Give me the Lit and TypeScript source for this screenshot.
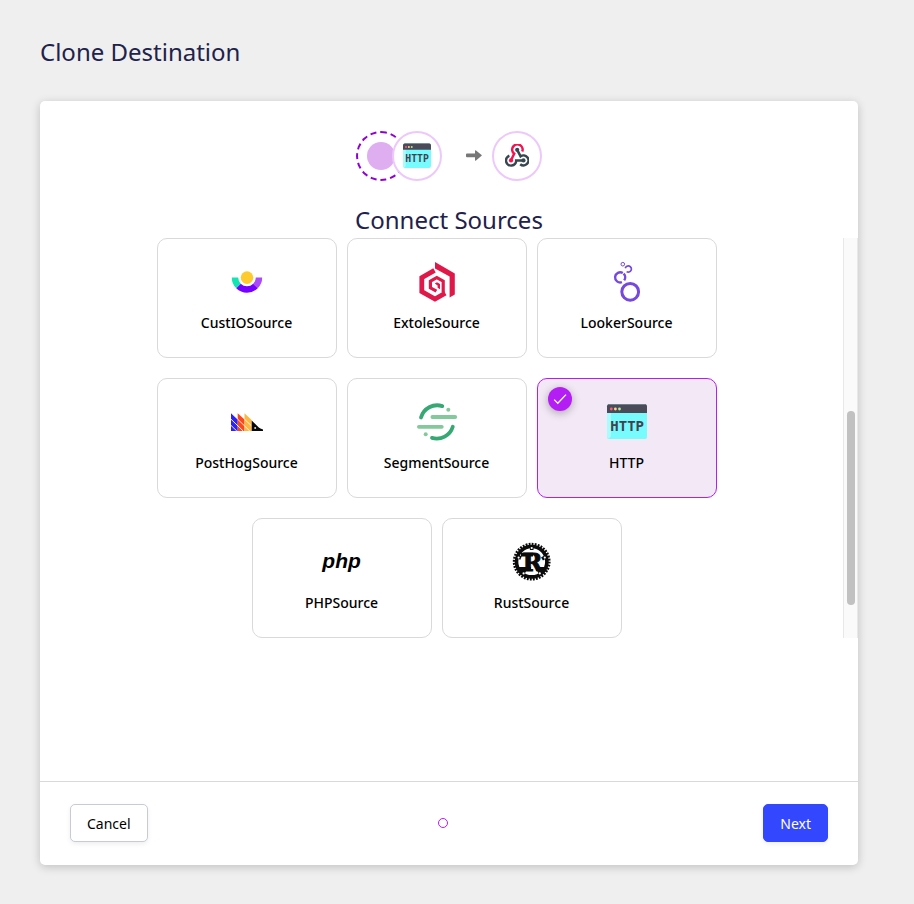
import { LitElement, html, css, svg, TemplateResult } from "lit";
import { customElement, property, state } from "lit/decorators.js";
import { classMap } from "lit/directives/class-map.js";

const icons: Record<string, TemplateResult> = {
  custio: svg`
    <g fill="none" stroke-width="6.4">
      <path d="M8 15.5A12 12 0 0 0 11.5 24" stroke="#12e5b2"/>
      <path d="M28.5 24A12 12 0 0 0 32 15.5" stroke="#a94bf8"/>
      <path d="M11.5 24A12 12 0 0 0 28.5 24" stroke="#7500ff"/>
    </g>
    <circle cx="20" cy="15.6" r="7.6" fill="#fff"/>
    <circle cx="20" cy="15.6" r="6.3" fill="#fdcb2e"/>`,
  extole: svg`
    <g fill="none" stroke="#e01849">
      <path d="M17.5 8.3L4.8 15.6V29.6L18 37L28.3 31.2" stroke-width="4.8"/>
      <path d="M19.4 29.2L13.4 25.8V19.2L19.8 15.6L26.2 19.2V30.2" stroke-width="3.2"/>
    </g>
    <path d="M18 0L37.8 11.4V32.6L32.6 35.6V14.6L18 6.4Z" fill="#e01849"/>
    <path d="M17.8 21.4L20 20.2L23 22V27.2L20.6 25.8V23.4Z" fill="#e01849"/>`,
  looker: svg`
    <g fill="none" stroke="#7549dc">
      <circle cx="23.2" cy="29.8" r="8.4" stroke-width="3"/>
      <path d="M15.8 11A5.1 5.1 0 1 0 14.9 20.2" stroke-width="2.4"/>
      <path d="M16.6 11.6A5.2 5.2 0 0 1 17.2 18.4" stroke-width="2.4"/>
      <path d="M18.3 6.2A3.1 3.1 0 1 1 19.6 9.6" stroke-width="1.7"/>
      <circle cx="15.8" cy="2.2" r="1.8" stroke-width="1"/>
    </g>`,
  posthog: svg`
    <path d="M4 11.2L10.7 17.6V29H4Z" fill="#2f22f5"/>
    <path d="M4.6 11.2L10.7 11.2V17.2Z" fill="#fff"/>
    <path d="M10.7 11.2L17.5 17.6V29H10.7Z" fill="#fb471c"/>
    <path d="M17.5 11.2L24.6 18V29H17.5Z" fill="#fdb640"/>
    <path d="M4 17.2L16.2 29M4 23.4L9.8 29M10.7 17.2L22.8 29M17.5 17.2L24.6 24" stroke="#fff" stroke-width=".9"/>
    <path d="M24.7 18.4L31.8 25.5Q33 26.8 36 27.4V29H24.7Z" fill="#080808"/>
    <circle cx="28.2" cy="26" r="1" fill="#ddd"/>`,
  segment: svg`
    <g fill="none" stroke-width="3.8" stroke-linecap="round">
      <path d="M4 15.5A16.8 16.8 0 0 1 25.3 4.1M35.8 24.7A16.8 16.8 0 0 1 15 35.9" stroke="#35a873"/>
      <path d="M15.4 15H38.2M1.9 24.8H24.8" stroke="#84c99b"/>
    </g>
    <circle cx="31.3" cy="7.7" r="2" fill="#84c99b"/>
    <circle cx="8.7" cy="32.3" r="2" fill="#84c99b"/>`,
  http: svg`
    <rect x="0" y="2" width="40" height="35" rx="2.6" fill="#78fbfd"/>
    <path d="M0 10H4V33Q4 36 1.5 36.6Q0 36 0 34Z" fill="#a8fcfd"/>
    <path d="M0 11V4.6Q0 2 2.6 2H37.4Q40 2 40 4.6V11Z" fill="#4a4a59"/>
    <path d="M1 3Q1.6 2 2.6 2H37.4Q38.4 2 39 3Z" fill="#6a7f8c"/>
    <circle cx="4.3" cy="7" r="1.4" fill="#ff5b6a"/>
    <circle cx="8.4" cy="7" r="1.4" fill="#ffd782"/>
    <circle cx="12.5" cy="7" r="1.4" fill="#b4e69a"/>
    <text x="20.2" y="28.6" class="http-text">HTTP</text>`,
  php: svg`<text x="19.6" y="26" class="php-text">php</text>`,
  rust: svg`
    <g fill="none" stroke="#0b0b0b">
      <circle cx="19.7" cy="19.7" r="17.4" stroke-width="3" pathLength="72" stroke-dasharray="1.2 0.8"/>
      <circle cx="19.7" cy="19.7" r="15.2" stroke-width="3.6"/>
      <path d="M5.5 14.5L9 16M34 14.5L30 17M11 31.5L12.5 28M28.5 31.5L27 28M19.7 5V8" stroke-width="3.6"/>
      <path d="M9 12.6H21M7 27H19M24 27H33" stroke-width="3.8"/>
    </g>
    <g fill="#fff">
      <circle cx="19.7" cy="6" r="1.1"/><circle cx="6.6" cy="15.6" r="1.1"/>
      <circle cx="32.8" cy="15.6" r="1.1"/><circle cx="11.6" cy="31.4" r="1.1"/>
      <circle cx="27.8" cy="31.4" r="1.1"/>
    </g>
    <text x="20.6" y="28.6" class="rust-text">R</text>`,
};

interface Source {
  id: string;
  label: string;
}

const sources: Source[] = [
  { id: "custio", label: "CustIOSource" },
  { id: "extole", label: "ExtoleSource" },
  { id: "looker", label: "LookerSource" },
  { id: "posthog", label: "PostHogSource" },
  { id: "segment", label: "SegmentSource" },
  { id: "http", label: "HTTP" },
  { id: "php", label: "PHPSource" },
  { id: "rust", label: "RustSource" },
];

@customElement("source-icon")
export class SourceIcon extends LitElement {
  @property() name = "";

  static styles = css`
    :host { display: block; width: 40px; height: 40px; }
    .icon { display: block; width: 100%; height: 100%; overflow: visible; }
    .http-text { font: 700 14px "DejaVu Sans Mono", monospace; fill: #42424f; text-anchor: middle; }
    .php-text { font: italic 700 21px "Liberation Sans", sans-serif; fill: #000; text-anchor: middle; }
    .rust-text { font: 700 24px "DejaVu Serif", serif; fill: #0b0b0b; stroke: #0b0b0b; stroke-width: 1px; text-anchor: middle; }
  `;

  render() {
    return html`<svg class="icon" viewBox="0 0 40 40" aria-hidden="true">${icons[this.name]}</svg>`;
  }
}

@customElement("source-card")
export class SourceCard extends LitElement {
  @property() name = "";
  @property() label = "";
  @property({ type: Boolean }) selected = false;

  static styles = css`
    :host { display: block; width: 180px; height: 120px; }
    .card {
      position: relative;
      box-sizing: border-box;
      width: 100%;
      height: 100%;
      padding: 0;
      display: flex;
      flex-direction: column;
      align-items: center;
      justify-content: center;
      gap: 10px;
      border: 1px solid #d9d9d9;
      border-radius: 10px;
      background: #fff;
      color: #000;
      font: 500 14px/22px "Noto Sans", sans-serif;
      cursor: pointer;
    }
    .selected { background: #f3e8f6; border-color: #b41ef5; }
    .check {
      position: absolute;
      top: 8px;
      left: 10px;
      width: 24px;
      height: 24px;
      border-radius: 50%;
      background: #b41ef5;
      box-shadow: 0 2px 8px rgba(0, 0, 0, 0.3);
    }
    .mark { display: block; fill: none; stroke: #fff; stroke-width: 1.3; }
  `;

  render() {
    return html`
      <button class=${classMap({ card: true, selected: this.selected })} type="button" aria-pressed=${this.selected}>
        ${this.selected
          ? html`<span class="check"><svg class="mark" width="24" height="24" viewBox="0 0 24 24"><path d="M6.2 12.6L9.8 16.2L18 7.6"/></svg></span>`
          : ""}
        <source-icon name=${this.name}></source-icon>
        <span>${this.label}</span>
      </button>`;
  }
}

@customElement("app-root")
export class AppRoot extends LitElement {
  @state() private selected = "http";

  static styles = css`
    :host {
      box-sizing: border-box;
      min-height: 100vh;
      padding: 36px 56px 39px 40px;
      display: flex;
      flex-direction: column;
      gap: 33px;
      background: #efefef;
      color: #21214a;
      font-family: "Noto Sans", sans-serif;
    }
    .title, .heading { margin: 0; font-size: 24px; font-weight: 400; }
    .title { line-height: 32px; }
    .heading { line-height: 36px; margin-top: 21px; text-align: center; }
    .panel {
      flex: 1;
      display: flex;
      flex-direction: column;
      border-radius: 5px;
      background: #fff;
      box-shadow: 0 2px 10px rgba(0, 0, 0, 0.2);
    }
    .body { flex: 1; padding: 30px 0; }
    .flow { display: flex; justify-content: center; align-items: center; }
    .node {
      box-sizing: border-box;
      width: 50px;
      height: 50px;
      display: flex;
      align-items: center;
      justify-content: center;
      border: 2px solid #ecc9fa;
      border-radius: 50%;
      background: #fff;
    }
    .empty { border: 2px dashed #8f00d6; }
    .dot { width: 28px; height: 28px; border-radius: 50%; background: #dfaef0; }
    .overlap { margin-left: -14px; z-index: 1; }
    .small { width: 28px; height: 28px; }
    .arrow { margin: 0 10px 0 24px; }
    .scroller { display: flex; }
    .list {
      flex: 1;
      display: flex;
      justify-content: center;
    }
    .cards {
      max-width: 570px;
      display: flex;
      flex-wrap: wrap;
      justify-content: center;
      row-gap: 20px;
    }
    .item { margin-right: 10px; }
    .track {
      box-sizing: border-box;
      width: 15px;
      display: flex;
      flex-direction: column;
      align-items: center;
      border: 1px solid #e8e8e8;
      border-width: 0 1px;
      background: #fafafa;
    }
    .before { flex: 173; }
    .thumb { flex: 194; width: 8px; border-radius: 4px; background: #c1c1c1; }
    .after { flex: 33; }
    .footer {
      display: flex;
      justify-content: space-between;
      align-items: center;
      padding: 22px 30px 23px;
      border-top: 1px solid #d9d9d9;
    }
    .button {
      box-sizing: border-box;
      height: 38px;
      padding: 2px 16px 0;
      border: 1px solid #c5ccd6;
      border-radius: 5px;
      background: #fff;
      color: #000;
      font: 400 14px/22px "Noto Sans", sans-serif;
      box-shadow: 0 2px 5px rgba(0, 0, 0, 0.07);
    }
    .primary { border-color: #3347ff; background: #3347ff; color: #fff; }
    .step {
      box-sizing: border-box;
      width: 10px;
      height: 10px;
      margin-right: 24px;
      border: 1px solid #b41ef5;
      border-radius: 50%;
    }
  `;

  render() {
    return html`
      <h1 class="title">Clone Destination</h1>
      <main class="panel">
        <section class="body">
          <div class="flow">
            <div class="node empty"><span class="dot"></span></div>
            <div class="node overlap"><source-icon class="small" name="http"></source-icon></div>
            <svg class="arrow" width="16" height="12" viewBox="0 0 16 12" aria-hidden="true">
              <path d="M1 3.6H9V.8Q9 -.2 10 .4L15.6 5Q16 5.4 15.6 5.8L10 10.4Q9 11 9 10V7.2H1Q0 7.2 0 6.2V4.6Q0 3.6 1 3.6Z" fill="#777"/>
            </svg>
            <div class="node">
              <svg width="24" height="24" viewBox="0 0 24 24" fill="none" stroke-width="2.5" aria-hidden="true">
                <path d="M17.2 7.6A5.2 5.2 0 1 0 9.2 9.7L6 16.2" stroke="#f5124f"/>
                <circle cx="6" cy="16.4" r="2.1" fill="#f5124f"/>
                <g stroke="#37474f">
                  <path d="M12.2 5.8L15.6 12.3A5 5 0 1 1 15.2 20.2"/>
                  <path d="M18.5 16.4H11.2A5.1 5.1 0 1 1 4.4 11.7"/>
                </g>
                <circle cx="12.2" cy="5.8" r="2.1" fill="#37474f"/>
                <circle cx="18.5" cy="16.4" r="2.1" fill="#37474f"/>
              </svg>
            </div>
          </div>
          <h2 class="heading">Connect Sources</h2>
          <div class="scroller">
            <div class="list">
              <div class="cards">
                ${sources.map(
                  (s) => html`<source-card
                    class="item"
                    name=${s.id}
                    label=${s.label}
                    ?selected=${s.id === this.selected}
                    @click=${() => (this.selected = s.id)}
                  ></source-card>`
                )}
              </div>
            </div>
            <div class="track"><span class="before"></span><span class="thumb"></span><span class="after"></span></div>
          </div>
        </section>
        <footer class="footer">
          <button class="button" type="button">Cancel</button>
          <span class="step"></span>
          <button class="button primary" type="button">Next</button>
        </footer>
      </main>
    `;
  }
}
